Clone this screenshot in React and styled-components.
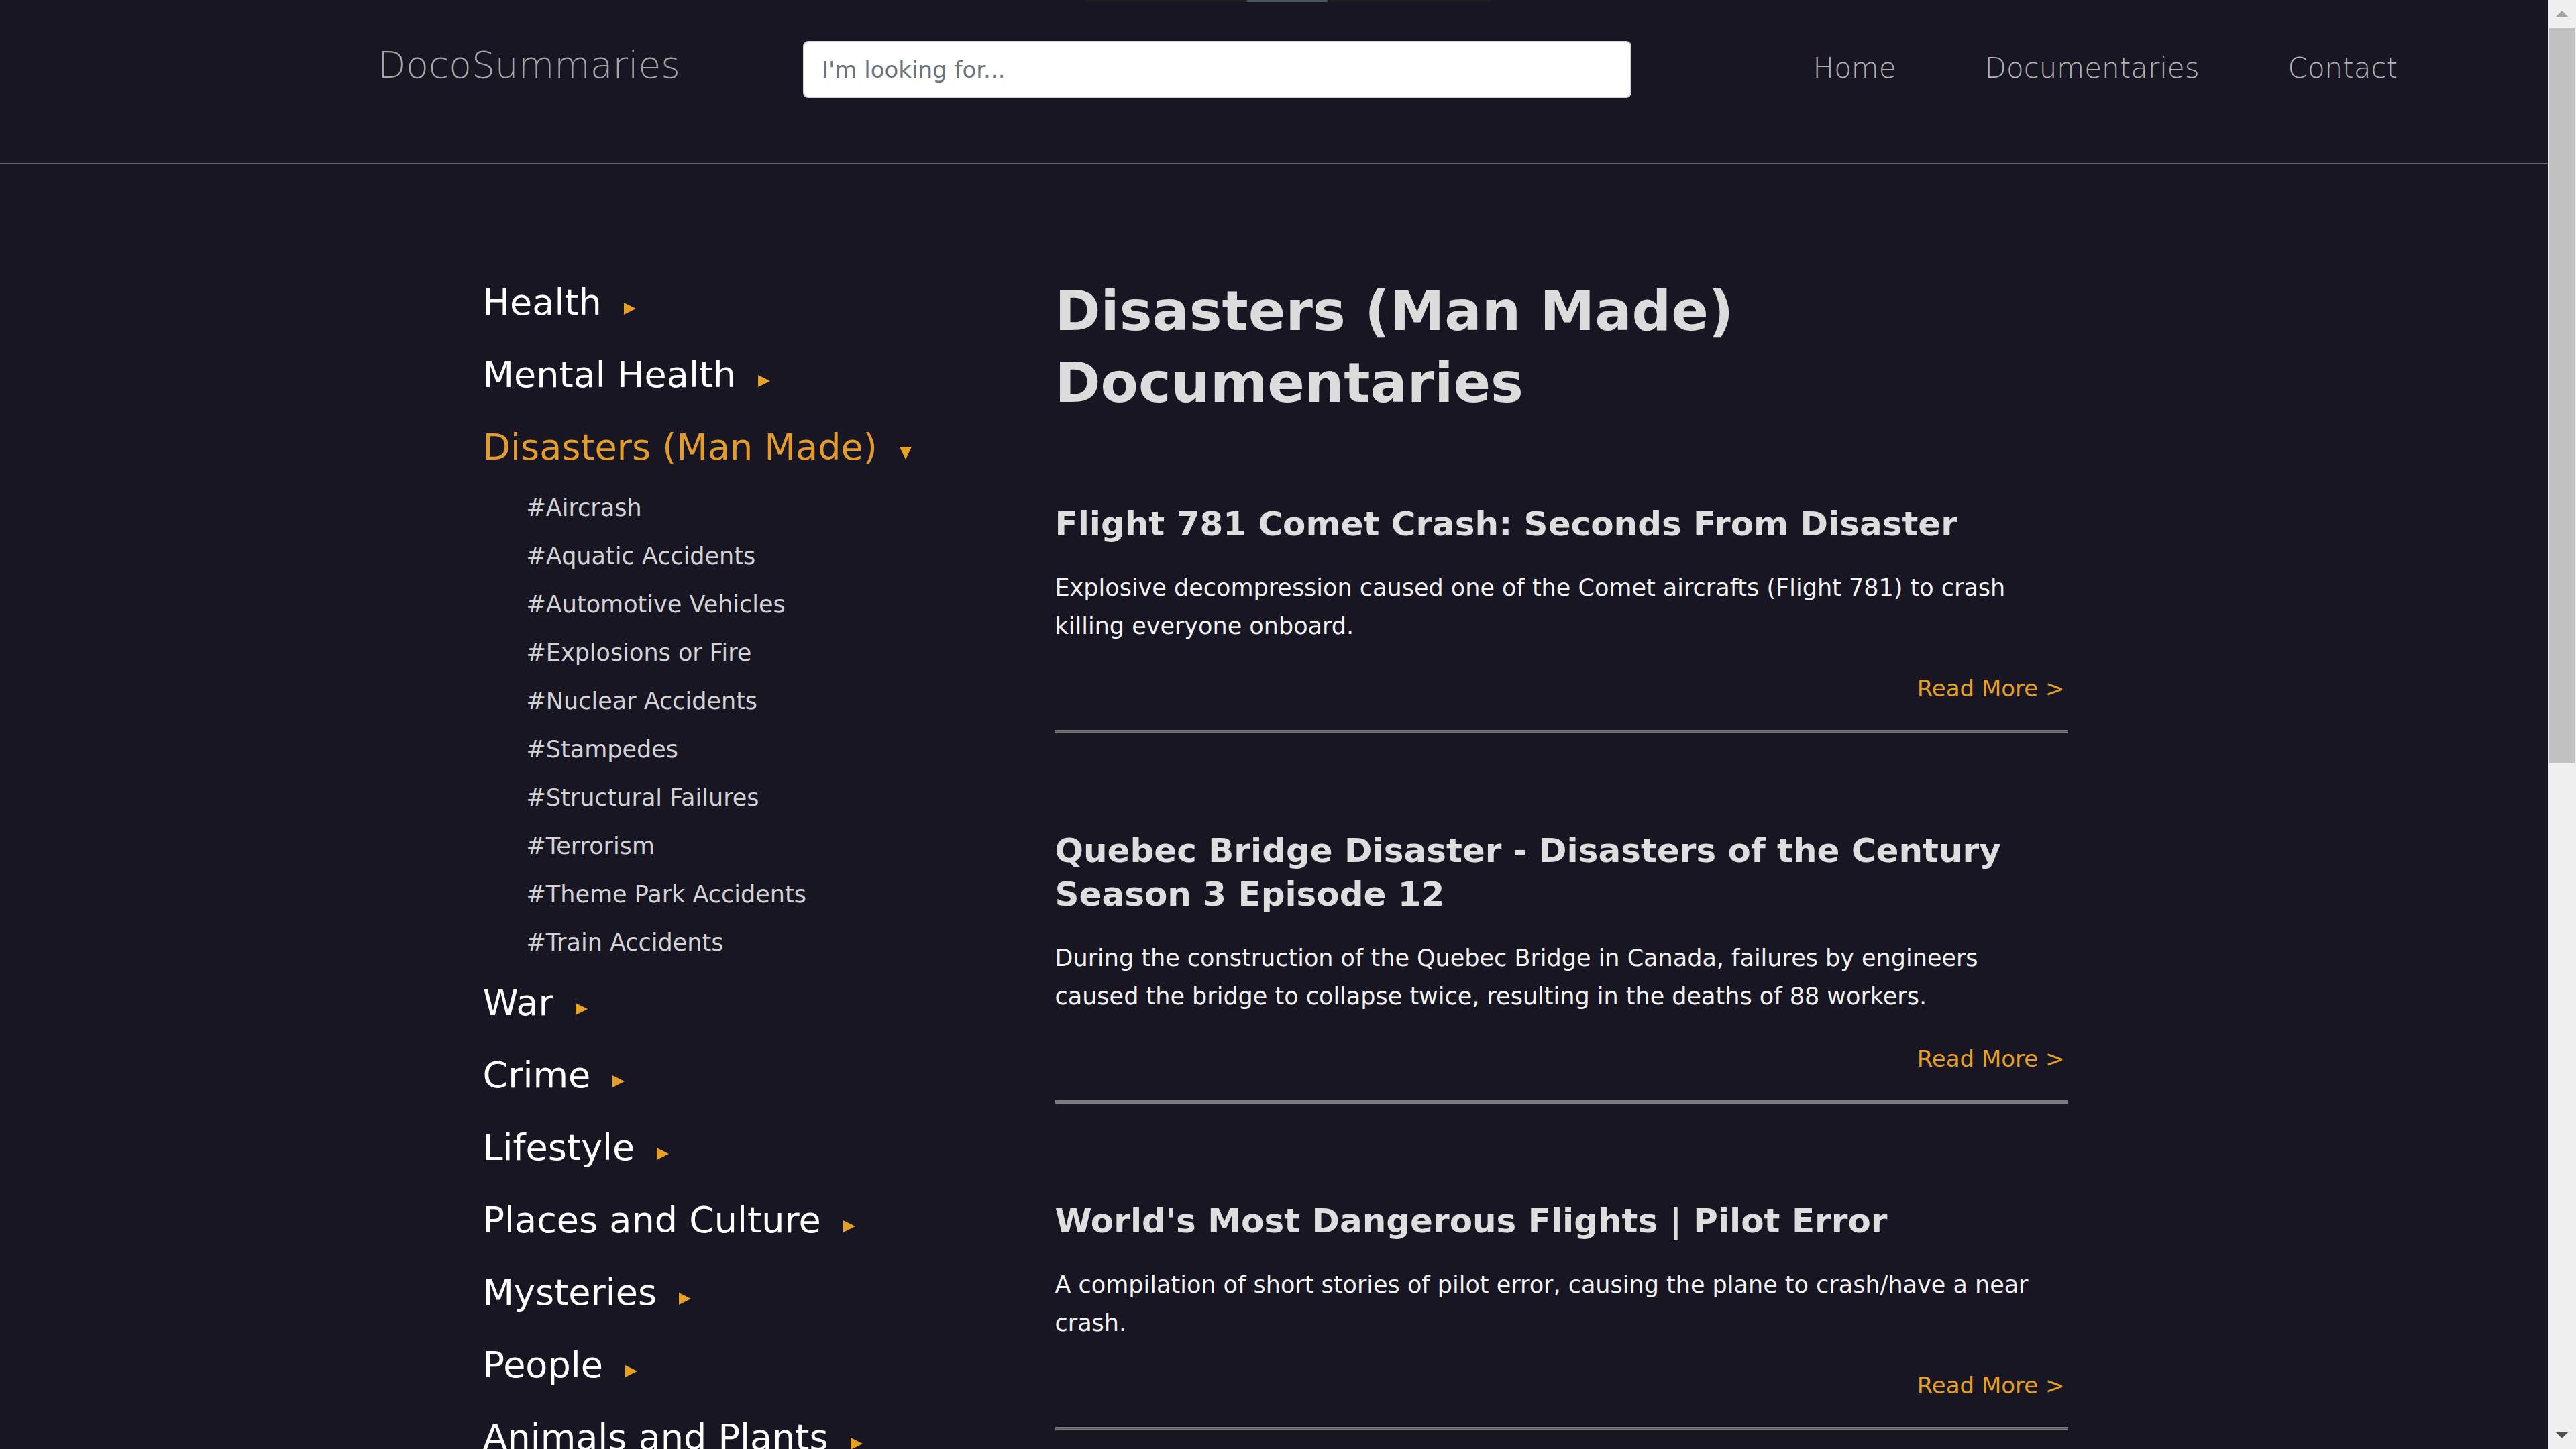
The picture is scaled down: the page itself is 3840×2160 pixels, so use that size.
import React from 'react';
import styled, { createGlobalStyle } from 'styled-components';

const FONT = '"DejaVu Sans", "Liberation Sans", sans-serif';

const categories = [
  { name: 'Health' },
  { name: 'Mental Health' },
  {
    name: 'Disasters (Man Made)',
    open: true,
    tags: [
      'Aircrash',
      'Aquatic Accidents',
      'Automotive Vehicles',
      'Explosions or Fire',
      'Nuclear Accidents',
      'Stampedes',
      'Structural Failures',
      'Terrorism',
      'Theme Park Accidents',
      'Train Accidents',
    ],
  },
  { name: 'War' },
  { name: 'Crime' },
  { name: 'Lifestyle' },
  { name: 'Places and Culture' },
  { name: 'Mysteries' },
  { name: 'People' },
  { name: 'Animals and Plants' },
];

const docos = [
  {
    title: 'Flight 781 Comet Crash: Seconds From Disaster',
    summary:
      'Explosive decompression caused one of the Comet aircrafts (Flight 781) to crash killing everyone onboard.',
  },
  {
    title: 'Quebec Bridge Disaster - Disasters of the Century Season 3 Episode 12',
    summary:
      'During the construction of the Quebec Bridge in Canada, failures by engineers caused the bridge to collapse twice, resulting in the deaths of 88 workers.',
  },
  {
    title: "World's Most Dangerous Flights | Pilot Error",
    summary:
      'A compilation of short stories of pilot error, causing the plane to crash/have a near crash.',
  },
];

const App = () => (
  <>
    <GlobalStyle />
    <Frame>
      <Viewport>
        <Header>
          <TopStrip>
            <TopStripThumb />
          </TopStrip>
          <Brand href="#">DocoSummaries</Brand>
          <Search type="text" placeholder="I'm looking for..." />
          <Nav>
            <NavLink href="#">Home</NavLink>
            <NavLink href="#">Documentaries</NavLink>
            <NavLink href="#">Contact</NavLink>
          </Nav>
        </Header>

        <Content>
          <Sidebar>
            <CategoryList>
              {categories.map((cat) => (
                <li key={cat.name}>
                  <CategoryLink href="#" $active={cat.open}>
                    {cat.name}
                    <Caret $open={cat.open} />
                  </CategoryLink>
                  {cat.tags && (
                    <TagList>
                      {cat.tags.map((tag) => (
                        <li key={tag}>
                          <TagLink href="#">#{tag}</TagLink>
                        </li>
                      ))}
                    </TagList>
                  )}
                </li>
              ))}
            </CategoryList>
          </Sidebar>

          <Main>
            <PageTitle>Disasters (Man Made) Documentaries</PageTitle>
            {docos.map((doco) => (
              <Card key={doco.title}>
                <CardTitle>{doco.title}</CardTitle>
                <Summary>{doco.summary}</Summary>
                <ReadMore href="#">Read More &gt;</ReadMore>
                <Divider />
              </Card>
            ))}
          </Main>
        </Content>
      </Viewport>

      <Rail>
        <RailButton>
          <Arrow $up />
        </RailButton>
        <RailTrack>
          <Thumb />
        </RailTrack>
        <RailButton>
          <Arrow />
        </RailButton>
      </Rail>
    </Frame>
  </>
);

const GlobalStyle = createGlobalStyle`
  html, body {
    margin: 0;
    padding: 0;
    height: 100%;
    overflow: hidden;
    background: #181622;
    font-family: ${FONT};
  }
  #root {
    height: 100%;
  }
  * {
    box-sizing: border-box;
  }
`;

const Frame = styled.div`
  display: flex;
  height: 100vh;
`;

const Viewport = styled.div`
  flex: 1;
  min-width: 0;
  overflow: hidden;
  background: #181622;
`;

const Header = styled.header`
  position: relative;
  display: flex;
  align-items: baseline;
  height: 244px;
  padding: 61px 224px 0 563px;
  border-bottom: 1px solid #68676e;
`;

const TopStrip = styled.div`
  position: absolute;
  top: 0;
  left: 1619px;
  width: 603px;
  height: 3px;
  background: #1e1e1e;
`;

const TopStripThumb = styled.div`
  margin-left: 240px;
  width: 120px;
  height: 100%;
  background: #4a5558;
`;

const Brand = styled.a`
  flex: none;
  width: 634px;
  font-size: 55px;
  font-weight: 300;
  color: #a4a4a4;
  text-decoration: none;
`;

const Search = styled.input`
  flex: none;
  width: 1235px;
  height: 85px;
  padding: 0 26px;
  font-family: ${FONT};
  font-size: 34px;
  color: #495057;
  background: #fff;
  border: 2px solid #cfd3da;
  border-radius: 8px;
  outline: none;

  &::placeholder {
    color: #6c757d;
  }
`;

const Nav = styled.nav`
  display: flex;
  gap: 132px;
  margin-left: auto;
`;

const NavLink = styled.a`
  font-size: 42px;
  font-weight: 300;
  color: #b2b2b2;
  text-decoration: none;
`;

const Content = styled.div`
  display: grid;
  grid-template-columns: 857px 1510px;
  width: 2367px;
  margin: 0 auto;
  padding-top: 153px;
`;

const Sidebar = styled.aside`
  padding-left: 4px;
`;

const CategoryList = styled.ul`
  list-style: none;
  margin: 0;
  padding: 0;
`;

const CategoryLink = styled.a`
  display: block;
  font-size: 54px;
  line-height: 108px;
  white-space: nowrap;
  color: ${(p) => (p.$active ? '#e39c2b' : '#ffffff')};
  text-decoration: none;
`;

const Caret = styled.span`
  display: inline-block;
  width: 0;
  height: 0;
  margin-left: 33px;
  ${(p) =>
    p.$open
      ? `
    border-left: 9.5px solid transparent;
    border-right: 9.5px solid transparent;
    border-top: 19px solid #e6a125;
  `
      : `
    border-top: 9px solid transparent;
    border-bottom: 9px solid transparent;
    border-left: 18px solid #e6a125;
  `}
`;

const TagList = styled.ul`
  list-style: none;
  margin: 0;
  padding: 0 0 0 65px;
`;

const TagLink = styled.a`
  display: block;
  font-size: 35px;
  line-height: 72px;
  white-space: nowrap;
  color: #d3d3d6;
  text-decoration: none;
`;

const Main = styled.main`
  padding-top: 13px;
`;

const PageTitle = styled.h1`
  margin: 0 0 125px;
  font-size: 82px;
  font-weight: 700;
  line-height: 107px;
  color: #dcdcdc;
`;

const Card = styled.article`
  & + & {
    margin-top: 143px;
  }
`;

const CardTitle = styled.h3`
  margin: 0;
  font-size: 50px;
  font-weight: 700;
  line-height: 65px;
  color: #dedede;
`;

const Summary = styled.p`
  margin: 34px 30px 0 0;
  font-size: 35px;
  line-height: 57px;
  color: #f3f3f3;
`;

const ReadMore = styled.a`
  display: block;
  margin-top: 39px;
  padding-right: 5px;
  font-size: 34px;
  line-height: 51px;
  text-align: right;
  color: #e6a024;
  text-decoration: none;
`;

const Divider = styled.hr`
  margin: 36px 0 0;
  height: 5px;
  border: none;
  border-top: 2px solid #7b7b7d;
  border-bottom: 2px solid #7b7b7d;
  background: #5c5b61;
`;

const Rail = styled.div`
  flex: none;
  display: flex;
  flex-direction: column;
  width: 42px;
  background: #f0f0f0;
`;

const RailButton = styled.div`
  display: flex;
  align-items: center;
  justify-content: center;
  height: 42px;
`;

const Arrow = styled.span`
  width: 0;
  height: 0;
  border-left: 10px solid transparent;
  border-right: 10px solid transparent;
  ${(p) => (p.$up ? 'border-bottom: 10px solid #a3a3a3;' : 'border-top: 10px solid #505050;')}
`;

const RailTrack = styled.div`
  flex: 1;
  padding: 0 2px;
`;

const Thumb = styled.div`
  height: 1095px;
  background: #c1c1c1;
`;

export default App;
